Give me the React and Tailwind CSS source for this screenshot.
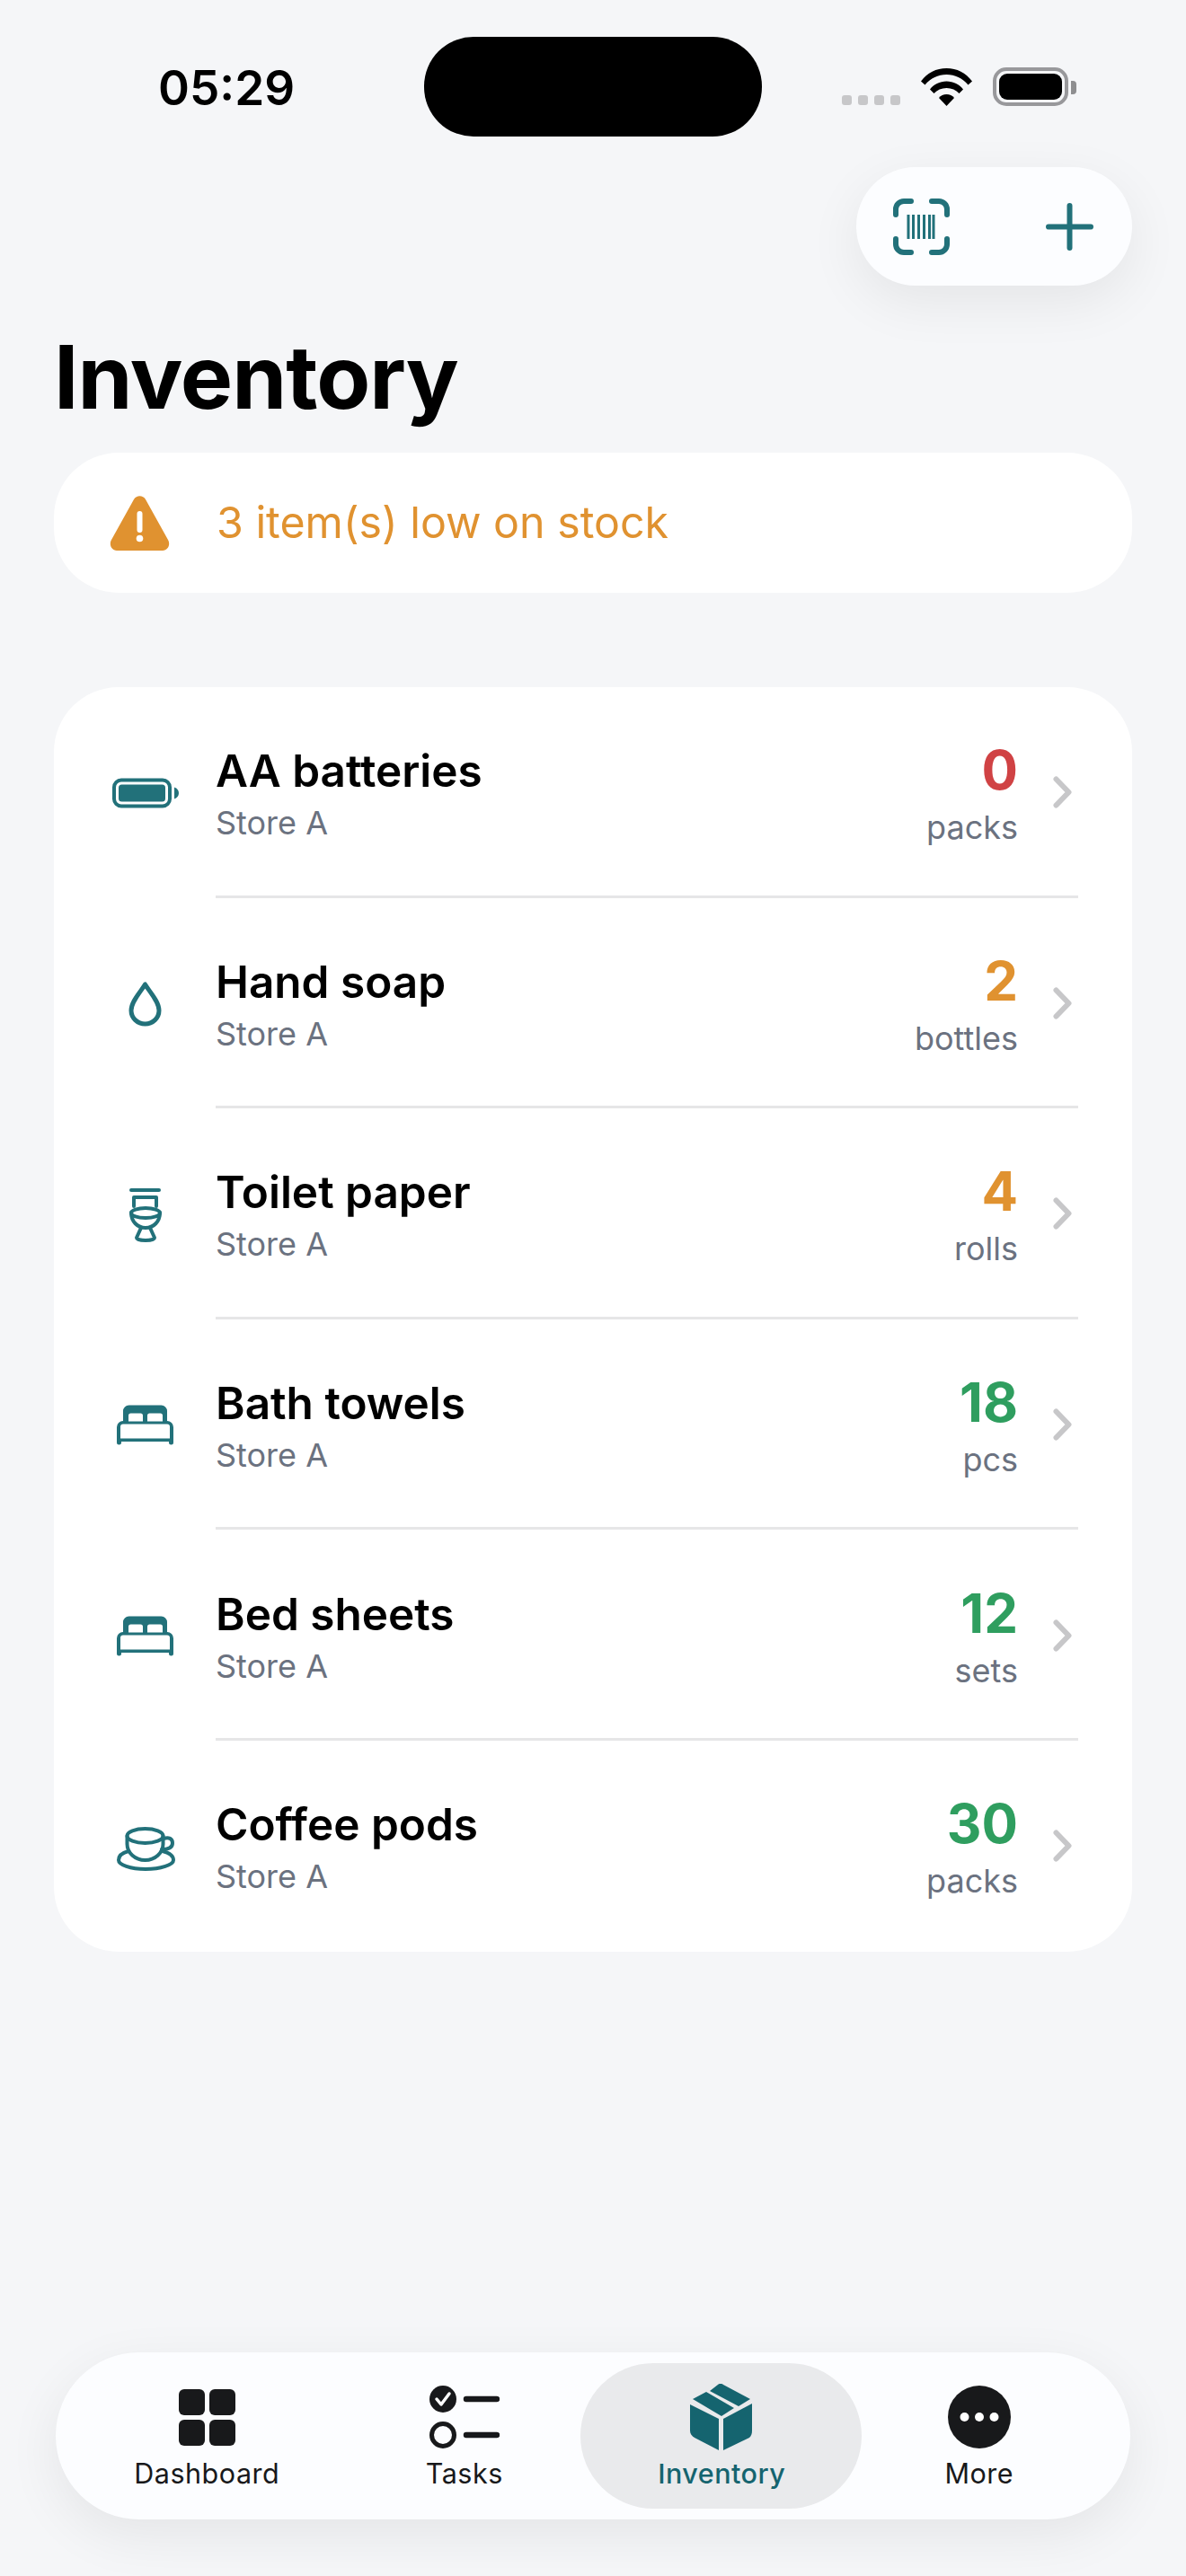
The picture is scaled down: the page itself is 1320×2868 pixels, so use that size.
const TEAL = "#22717a";

const items = [
  { name: "AA batteries", qty: "0", unit: "packs", color: "text-[#d04244]", icon: BatteryIcon },
  { name: "Hand soap", qty: "2", unit: "bottles", color: "text-[#e09230]", icon: DropIcon },
  { name: "Toilet paper", qty: "4", unit: "rolls", color: "text-[#e09230]", icon: ToiletIcon },
  { name: "Bath towels", qty: "18", unit: "pcs", color: "text-[#2f9e5f]", icon: BedIcon },
  { name: "Bed sheets", qty: "12", unit: "sets", color: "text-[#2f9e5f]", icon: BedIcon },
  { name: "Coffee pods", qty: "30", unit: "packs", color: "text-[#2f9e5f]", icon: CupIcon },
];

function BatteryIcon() {
  return (
    <svg width="84" height="84" viewBox="0 0 84 84">
      <rect x="7" y="28.5" width="62" height="29" rx="8" fill="none" stroke={TEAL} strokeWidth="4" />
      <rect x="12" y="33.5" width="52" height="19" rx="3.5" fill={TEAL} />
      <path d="M74 36.5c3 1 5 3.500 5 6.500s-2 5.500-5 6.500z" fill={TEAL} />
    </svg>
  );
}

function DropIcon() {
  return (
    <svg width="84" height="84" viewBox="0 0 84 84" fill="none" stroke={TEAL} strokeWidth="5">
      <path d="M41.500 21C36 30 26 40 26 50a15.500 15 0 0 0 31 0C57 40 47 30 41.500 21z" strokeLinejoin="round" />
    </svg>
  );
}

function ToiletIcon() {
  return (
    <svg width="84" height="84" viewBox="0 0 84 84" fill="none" stroke={TEAL} strokeWidth="4" strokeLinecap="round" strokeLinejoin="round">
      <path d="M26 16h31" />
      <path d="M29 34V24h25v10" />
      <ellipse cx="42" cy="41.500" rx="16" ry="5.500" />
      <path d="M26 41c0 10 7 17 16 17s16-7 16-17" />
      <path d="M37 58l-5 11c0 2 5 3 10 3s10-1 10-3l-5-11" />
    </svg>
  );
}

function BedIcon() {
  return (
    <svg width="84" height="84" viewBox="0 0 84 84" fill={TEAL}>
      <path
        fillRule="evenodd"
        d="M17 27a6.500 6.500 0 0 1 6.500-6.500h36A6.500 6.500 0 0 1 66 27v11a7 7 0 0 1 7 7v17a2.500 2.500 0 0 1-5 0v-1H15v1a2.500 2.500 0 0 1-5 0V45a7 7 0 0 1 7-7zM23 38.500V32a2.500 2.500 0 0 1 2.500-2.500h11A2.500 2.500 0 0 1 39 32v6.500zM44 38.500V32a2.500 2.500 0 0 1 2.500-2.500h12A2.500 2.500 0 0 1 61 32v6.500zM17 41.500a3 3 0 0 0-3 3v13h55v-13a3 3 0 0 0-3-3z"
      />
    </svg>
  );
}

function CupIcon() {
  return (
    <svg width="84" height="84" viewBox="0 0 84 84" fill="none" stroke={TEAL} strokeWidth="4" strokeLinecap="round">
      <ellipse cx="41.500" cy="31" rx="20" ry="8" />
      <path d="M21.500 31v9c0 10 9 18 20 18s20-8 20-18v-9" />
      <path d="M62 34c6-2 10 0 10 5s-5 7-12 7" />
      <path d="M23 48c-8 2-11 5-11 10 0 5 13 10 30 10s31-5 31-10c0-4-4-8-12-10" />
    </svg>
  );
}

function Chevron() {
  return (
    <svg width="21" height="36" viewBox="0 0 21 36" fill="none" stroke="#c7c7c9" strokeWidth="6" strokeLinecap="round" strokeLinejoin="round">
      <path d="M3.500 3.500L17.500 18 3.500 32.500" />
    </svg>
  );
}

function StatusBar() {
  return (
    <div className="h-[186px] flex items-start pt-[41px] relative">
      <span className="absolute left-[176px] top-[66px] text-[53px] leading-[64px] font-semibold text-black">05:29</span>
      <div className="ml-[472px] w-[376px] h-[111px] rounded-[55px] bg-black" />
      <div className="ml-[89px] mt-[34px] flex items-end">
        <div className="flex gap-[7px] mb-[1px]">
          <div className="w-[11px] h-[11px] rounded-[3px] bg-[#c7c7c9]" />
          <div className="w-[11px] h-[11px] rounded-[3px] bg-[#c7c7c9]" />
          <div className="w-[11px] h-[11px] rounded-[3px] bg-[#c7c7c9]" />
          <div className="w-[11px] h-[11px] rounded-[3px] bg-[#c7c7c9]" />
        </div>
        <svg className="ml-[23px]" width="57" height="42" viewBox="0 0 57 42" fill="black">
          <path d="M0 14.500C7 5 17 0 28.500 0S50 5 57 14.500l-4.500 4C46 11 38 7 28.500 7S11 11 4.500 18.500z" />
          <path d="M10 23.500C14 18 21 14.500 28.500 14.500S43 18 47 23.500l-4.500 4.500c-3.500-4-8.500-6-14-6s-10.500 2-14 6z" />
          <path d="M20 33c2-2.500 5-4 8.500-4s6.500 1.500 8.500 4L28.500 42z" />
        </svg>
        <div className="ml-[23px] w-[84px] h-[43px] rounded-[15px] border-[4px] border-[#98989b] p-[3px]">
          <div className="w-full h-full rounded-[9px] bg-black" />
        </div>
        <div className="ml-[3px] mb-[13px] w-[6px] h-[15px] rounded-r-[4px] bg-[#8e8e90]" />
      </div>
    </div>
  );
}

function ActionPill() {
  return (
    <div className="ml-[953px] w-[307px] h-[132px] rounded-[66px] bg-[#fcfdff] shadow-[0_18px_60px_rgba(0,0,0,0.07)] flex items-center">
      <svg className="ml-[41px]" width="63" height="63" viewBox="0 0 63 63" fill="none" stroke={TEAL} strokeWidth="6" strokeLinecap="round">
        <path d="M3 18V12a9 9 0 0 1 9-9h8M43 3h8a9 9 0 0 1 9 9v6M60 45v6a9 9 0 0 1-9 9h-8M20 60h-8a9 9 0 0 1-9-9v-6" />
        <path
          d="M17 18v27M22.500 18v27M28.500 18v27M34.500 18v27M40.500 18v27M45 18v27"
          strokeLinecap="butt"
          strokeWidth="3"
        />
      </svg>
      <svg className="ml-[107px]" width="53" height="53" viewBox="0 0 53 53" fill="none" stroke={TEAL} strokeWidth="6" strokeLinecap="round">
        <path d="M26.500 3v47M3 26.500h47" />
      </svg>
    </div>
  );
}

function LowStockBanner() {
  return (
    <div className="mx-[60px] h-[156px] rounded-[72px] bg-white flex items-center pl-[62px]">
      <svg width="67" height="61" viewBox="0 0 67 61">
        <path d="M27 4c3-5 10-5 13 0l25 45c3 5 0 12-6 12H8c-6 0-9-7-6-12z" fill="#e09230" />
        <rect x="30.500" y="17" width="6" height="24" rx="3" fill="white" />
        <circle cx="33.500" cy="47.500" r="3.800" fill="white" />
      </svg>
      <span className="ml-[52px] text-[48.3px] text-[#e09230] font-normal">3 item(s) low on stock</span>
    </div>
  );
}

function ItemRow({ item, last }) {
  const Icon = item.icon;
  return (
    <div className="h-[234.6px] flex items-center pl-[60px] relative">
      <Icon />
      <div className="ml-[36px] flex-1 mt-[3px]">
        <div className="text-[49.5px] leading-[58px] font-semibold text-black">{item.name}</div>
        <div className="mt-[7px] text-[36px] leading-[44px] text-[#6b7280]">Store A</div>
      </div>
      <div className="text-right mt-[3px]">
        <div className={`text-[60px] leading-[66px] font-bold ${item.color}`}>{item.qty}</div>
        <div className="mt-[9px] text-[36px] leading-[44px] text-[#6b7280]">{item.unit}</div>
      </div>
      <div className="ml-[39px] mr-[67px]">
        <Chevron />
      </div>
      {!last && <div className="absolute left-[180px] right-[60px] bottom-0 h-[3px] bg-[#e6e6e7]" />}
    </div>
  );
}

function Tab({ label, className, children }) {
  return (
    <div className={`relative flex-1 h-full pt-[36px] flex flex-col items-center ${className}`}>
      <div className="h-[72px] flex items-center justify-center">{children}</div>
      <span className="mt-[7px] text-[30.5px] leading-[40px] tracking-[0.5px]">{label}</span>
    </div>
  );
}

function TabBar() {
  return (
    <div className="mx-[62px] mb-[63px] h-[186px] px-[25px] rounded-[93px] bg-[#fcfdff] shadow-[0_18px_60px_rgba(0,0,0,0.07)] flex relative text-[#18191b]">
      <div className="absolute left-[584px] top-[12px] w-[313px] h-[162px] rounded-[81px] bg-[#e9eaec]" />
      <Tab label="Dashboard">
        <svg width="63" height="63" viewBox="0 0 63 63" fill="#18191b">
          <rect x="0" y="0" width="29" height="29" rx="6" />
          <rect x="34" y="0" width="29" height="29" rx="6" />
          <rect x="0" y="34" width="29" height="29" rx="6" />
          <rect x="34" y="34" width="29" height="29" rx="6" />
        </svg>
      </Tab>
      <Tab label="Tasks">
        <svg width="78" height="70" viewBox="0 0 78 70" fill="none" stroke="#18191b">
          <circle cx="15" cy="15" r="15" fill="#18191b" stroke="none" />
          <path d="M8 15l5 6 9-12" stroke="white" strokeWidth="3.500" strokeLinecap="round" strokeLinejoin="round" />
          <path d="M41 15h34M41 55h34" strokeWidth="6.500" strokeLinecap="round" />
          <circle cx="15" cy="55" r="12.500" strokeWidth="5" />
        </svg>
      </Tab>
      <Tab className="text-[#15646f] font-medium" label="Inventory">
        <svg width="70" height="74" viewBox="0 0 70 74" fill="#15646f">
          <path d="M22 8l9-7c2-1.500 4-1.500 6 0l30 16-13 8z" />
          <path d="M3 17l15-8 31 18-14 9z" />
          <path d="M0 23l32 16v35L5 60c-3-2-5-4-5-8z" />
          <path d="M69 22L37 39v35l29-14c2-2 3-4 3-8z" />
        </svg>
      </Tab>
      <Tab label="More">
        <svg width="70" height="70" viewBox="0 0 70 70">
          <circle cx="35" cy="35" r="35" fill="#18191b" />
          <circle cx="18.500" cy="35" r="5" fill="white" />
          <circle cx="35" cy="35" r="5" fill="white" />
          <circle cx="51.500" cy="35" r="5" fill="white" />
        </svg>
      </Tab>
    </div>
  );
}

export default function App() {
  return (
    <div className="w-[1320px] h-[2868px] bg-[#f5f6f8] flex flex-col overflow-hidden font-['Inter',sans-serif]">
      <StatusBar />
      <ActionPill />
      <h1 className="ml-[60px] mt-[42px] h-[144px] text-[98px] leading-[120px] font-bold text-black tracking-[-1px]">Inventory</h1>
      <LowStockBanner />
      <div className="mx-[60px] mt-[105px] rounded-[72px] bg-white">
        {items.map((item, i) => (
          <ItemRow key={item.name} item={item} last={i === items.length - 1} />
        ))}
      </div>
      <div className="flex-1" />
      <TabBar />
    </div>
  );
}
